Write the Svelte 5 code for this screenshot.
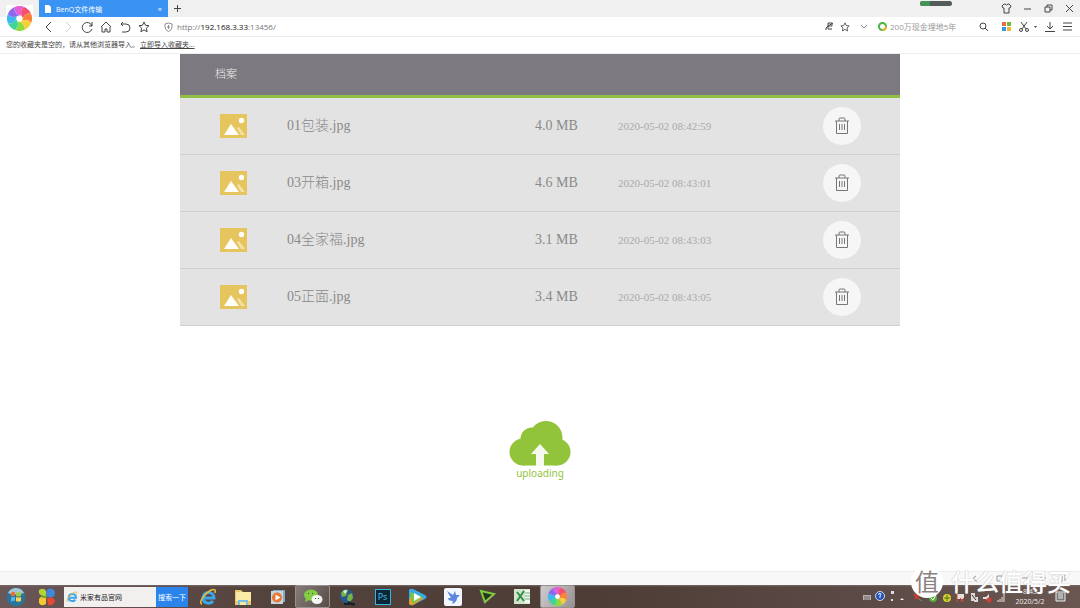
<script lang="ts">
	let files = $state([
		{ name: '01包装.jpg', size: '4.0 MB', date: '2020-05-02 08:42:59' },
		{ name: '03开箱.jpg', size: '4.6 MB', date: '2020-05-02 08:43:01' },
		{ name: '04全家福.jpg', size: '3.1 MB', date: '2020-05-02 08:43:03' },
		{ name: '05正面.jpg', size: '3.4 MB', date: '2020-05-02 08:43:05' }
	]);

	let url = $state('http://192.168.3.33:13456/');
	let editing = $state(false);
	let query = $state('米家有品官网');

	// scheme, host and the rest are tinted separately
	let parts = $derived(url.match(/^(\w+:\/\/)?([^:/]*)(.*)$/) ?? []);

	const nav = [
		{ label: '后退', d: 'M8 1 3 6l5 5' },
		{ label: '前进', d: 'M4 1l5 5-5 5', off: true },
		{ label: '刷新', d: 'M11 5a5 5 0 1 0 0 3M11 1v4H8' },
		{ label: '主页', d: 'M1 6l5-5 5 5M2 6v5h3V8h2v3h3V6' },
		{ label: '撤销', d: 'M4 1 2 3l2 2M2 3h5a4 4 0 0 1 0 8H3' },
		{ label: '收藏', d: 'M6 1l1.500 3.300 3.500.4-2.600 2.400.7 3.600L6 8.900 2.900 10.700l.7-3.600L1 4.700l3.500-.4z' }
	];

	const windowButtons = [
		{ label: '皮肤', d: 'M3 1 1 3l1 2h1v5h5V5h1l1-2-2-2H7q-1.500 2-3 0z' },
		{ label: '最小化', d: 'M2 6h7' },
		{ label: '还原', d: 'M2 4h5v5H2zM4 4V2h5v5H7' },
		{ label: '关闭', d: 'M2 2l7 7M9 2 2 9' }
	];

	// clockwise from the top
	const wheel = ['#e45fd6', '#f4506e', '#f98238', '#f5cf3c', '#8ddb3f', '#3fd596', '#3cb9ef', '#8b68ec'];

	function remove(name: string) {
		files = files.filter((f) => f.name !== name);
	}
</script>

{#snippet pinwheel(size: number)}
	<svg width={size} height={size} viewBox="-12 -12 24 24">
		{#each wheel as fill, i}
			<path {fill} transform="rotate({i * 45})" d="M0-3Q-6-6-4.600-11.100A12 12 0 0 1 4.600-11.100Q0-8.500 2.100-2.100z" />
		{/each}
		<circle r="3" fill="#fff" />
	</svg>
{/snippet}

{#snippet ie(size: number)}
	<svg width={size} height={size} viewBox="0 0 18 18" fill="none">
		<path d="M4 10h11a5.500 5.500 0 0 0-11 0 5.500 5 0 0 0 10 3" stroke="#3ba6ea" stroke-width="3" />
		<path d="M3 16C-1 15 5 6 12 2c3-1 5-1 4 3" stroke="#e7bd3c" stroke-width="1.500" />
	</svg>
{/snippet}

<div class="screen">
	<header>
		<div class="logo">{@render pinwheel(25)}</div>
		<div class="bars">
			<div class="tabs">
				<div class="tab">
					<svg width="6" height="8" viewBox="0 0 6 8"><path d="M0 0h4l2 2v6H0z" fill="#fff" /></svg>
					<span>BenQ文件传输</span>
					<button aria-label="关闭标签">×</button>
				</div>
				<button class="add" aria-label="新标签">
					<svg width="9" height="9" viewBox="0 0 9 9"><path d="M4.500 1v7M1 4.500h7" /></svg>
				</button>
				<div class="progress"><i></i></div>
				<div class="window-buttons">
					{#each windowButtons as b}
						<button aria-label={b.label}>
							<svg width="11" height="11" viewBox="0 0 11 11"><path d={b.d} /></svg>
						</button>
					{/each}
				</div>
			</div>
			<div class="toolbar">
				{#each nav as n}
					<button class="nav" class:off={n.off} aria-label={n.label}>
						<svg width="12" height="12" viewBox="0 0 12 12"><path d={n.d} /></svg>
					</button>
				{/each}
				<svg class="shield" width="9" height="10" viewBox="0 0 9 10">
					<path d="M4.500 1 8 2v3q0 3-3.500 4.500Q1 8 1 5V2zM4.500 3v4M3 5h3" />
				</svg>
				{#if editing}
					<input class="url" aria-label="地址" bind:value={url} onblur={() => (editing = false)} />
				{:else}
					<button class="url" onclick={() => (editing = true)}>{parts[1]}<b>{parts[2]}</b>{parts[3]}</button>
				{/if}
				<div class="page-tools">
					<button aria-label="兼容模式">
						<svg width="9" height="9" viewBox="0 0 9 9"><path d="M3 4h4V1H3v6h4M1 8q-1-2 2-4l5-3" /></svg>
					</button>
					<button aria-label="加入收藏">
						<svg width="10" height="10" viewBox="0 0 12 12"><path d={nav[5].d} /></svg>
					</button>
				</div>
				<button class="drop" aria-label="展开">
					<svg width="8" height="6" viewBox="0 0 8 6"><path d="M1 1l3 3 3-3" /></svg>
				</button>
				<label class="web-search">
					<svg width="9" height="9" viewBox="0 0 9 9">
						<circle class="ring" cx="4.500" cy="4.500" r="3.500" />
						<path class="ring-end" d="M4.500 8A3.500 3.500 0 0 0 8 4.500" />
					</svg>
					<input aria-label="搜索" placeholder="200万现金埋地5年" />
					<svg width="9" height="9" viewBox="0 0 9 9"><circle cx="4" cy="4" r="3" /><path d="M6 6l3 3" /></svg>
				</label>
				<div class="extras">
					<button aria-label="应用">
						<svg width="9" height="9" viewBox="0 0 9 9" class="solid">
							<path fill="#ef6a3c" d="M0 0h4v4H0z" /><path fill="#6fba3c" d="M5 0h4v4H5z" />
							<path fill="#3199e8" d="M0 5h4v4H0z" /><path fill="#f4b92f" d="M5 5h4v4H5z" />
						</svg>
					</button>
					<button class="cut" aria-label="截图">
						<svg width="10" height="10" viewBox="0 0 10 10">
							<path d="M2 0l5 7M8 0 3 7" /><circle cx="2" cy="8" r="1.500" /><circle cx="8" cy="8" r="1.500" />
						</svg>
						<svg width="3" height="2" viewBox="0 0 3 2" class="solid"><path d="M0 0h3L1.500 2z" fill="#444" /></svg>
					</button>
					<button aria-label="下载">
						<svg width="10" height="10" viewBox="0 0 10 10"><path d="M5 0v7M2 4l3 3 3-3M0 9.500h10" /></svg>
					</button>
					<button aria-label="菜单">
						<svg width="9" height="9" viewBox="0 0 9 9"><path d="M0 1h9M0 4.500h9M0 8h9" /></svg>
					</button>
				</div>
			</div>
		</div>
	</header>

	<div class="favorites">
		<span>您的收藏夹是空的，请从其他浏览器导入。</span>
		<a href="#import">立即导入收藏夹...</a>
	</div>

	<main>
		<section class="archive">
			<h1>档案</h1>
			<table>
				<tbody>
					{#each files as file (file.name)}
						<tr>
							<td class="thumb">
								<svg width="27" height="24" viewBox="0 0 27 24">
									<path d="M0 0h27v24H0z" fill="#e6c55f" />
									<path d="M17 14l2-1 6 8h-4z" fill="#f3e1a6" />
									<path d="M4 21l7-11 8 11z" fill="#fffef8" />
									<circle cx="21.500" cy="6.500" r="2.700" fill="#fffef8" />
								</svg>
							</td>
							<td class="name">{file.name}</td>
							<td class="size">{file.size}</td>
							<td class="date">{file.date}</td>
							<td class="action">
								<button aria-label="删除 {file.name}" onclick={() => remove(file.name)}>
									<svg width="16" height="18" viewBox="0 0 16 18">
										<path d="M1 4h14M5 4V2q0-1 1-1h4q1 0 1 1v2M2.500 4v12.500h11V4M5.500 7v6M8 7v6M10.500 7v6" />
									</svg>
								</button>
							</td>
						</tr>
					{/each}
				</tbody>
			</table>
		</section>

		<button class="upload">
			<svg width="62" height="45" viewBox="0 0 62 45">
				<g fill="#92c43b">
					<circle cx="37" cy="16.500" r="16.500" /><circle cx="23" cy="18" r="11.500" />
					<circle cx="14" cy="31" r="13.500" /><circle cx="48" cy="31" r="13.500" />
					<path d="M14 18h34v26.500H14z" />
				</g>
				<path d="M31 23l9 10h-5v12h-8V33h-5z" fill="#f7faef" />
			</svg>
			<span>uploading</span>
		</button>
	</main>

	<div class="status">
		<svg width="116" height="9" viewBox="0 0 116 9">
			<path d="M2 5l3-3M24 2q-5 2 0 5h3M45 2h5v5h-5zM70 4h6M91 1v7M88 4h6M110 2v6M113 1v6" />
		</svg>
	</div>

	<footer>
		<button class="start" aria-label="开始">
			<svg width="20" height="20" viewBox="0 0 20 20">
				<circle cx="10" cy="10" r="9.500" fill="#2a7598" />
				<path d="M2 6a9 9 0 0 1 16 0q-8 3-16 0" fill="#a6c7d3" />
				<path d="M5 6q2-2 4-1v4Q7 8 5 10z" fill="#f26b32" /><path d="M10 5q3 1 5 0v4q-3 1-5 0z" fill="#9dcc47" />
				<path d="M5 11q2-2 4-1v4q-2-1-4 1z" fill="#55b9ef" /><path d="M10 10q3 1 5 0v4q-3 1-5 0z" fill="#ffd54c" />
			</svg>
		</button>
		<button class="start" aria-label="浏览器">
			<svg width="18" height="18" viewBox="0 0 18 18">
				<path d="M1 2q5-3 7 1v5H5Q0 7 1 2" fill="#b5d334" /><circle cx="12.500" cy="5" r="4.500" fill="#4387da" />
				<path d="M1 11q2-4 7-2v7q-5 3-7-1z" fill="#f5c932" /><path d="M9 10q7-2 8 3-1 5-7 4z" fill="#e54a34" />
				<path d="M3 8q4 2 6 0" fill="none" stroke="#6fa53a" stroke-width="2" />
			</svg>
		</button>
		<form onsubmit={(e) => e.preventDefault()}>
			<label>
				{@render ie(12)}
				<input aria-label="桌面搜索" bind:value={query} />
			</label>
			<button>搜索一下</button>
		</form>
		<nav>
			<button aria-label="Internet Explorer">{@render ie(18)}</button>
			<button aria-label="资源管理器">
				<svg width="18" height="18" viewBox="0 0 18 18">
					<path d="M1 2h6l2 2h8v13H1z" fill="#e8c76b" /><path d="M2 4h15v9H2z" fill="#fbeaa4" />
					<path d="M4 12h10v5H4z" fill="#7dbfe4" /><path d="M6 14h6v3H6z" fill="#f8e8a0" />
				</svg>
			</button>
			<button aria-label="播放器">
				<svg width="16" height="16" viewBox="0 0 16 16">
					<path d="M3 1h12v12H3z" fill="#83aac7" /><path d="M1 2h12v13H1z" fill="#c6d6df" />
					<circle cx="7" cy="8.500" r="5" fill="#e97730" /><path d="M5.500 5.500l5 3-5 3z" fill="#fff" />
				</svg>
			</button>
			<button class="open" aria-label="微信">
				<svg width="20" height="16" viewBox="0 0 20 16">
					<ellipse cx="8" cy="6" rx="7" ry="5.500" fill="#83cc45" /><path d="M3 9l-1 4 4-2z" fill="#83cc45" />
					<ellipse cx="14" cy="10.500" rx="5.500" ry="4.500" fill="#f4f6f2" />
					<path d="M5 4h1v1H5zM9 4h1v1H9zM12 9h1v1h-1zM15 9h1v1h-1z" fill="#3d5033" />
				</svg>
			</button>
			<button aria-label="网络">
				<svg width="17" height="18" viewBox="0 0 17 18">
					<circle cx="7.500" cy="8" r="7" fill="#28558c" /><path d="M2 5q4-5 7-3l-2 6-4 1zM9 7l4-2 1 5-3 4-3-2z" fill="#77b249" />
					<path d="M4 3q3-2 4 0L6 6z" fill="#dceccc" /><path d="M5 16h11M9 14l6 3" stroke="#17212a" stroke-width="2" />
				</svg>
			</button>
			<button class="ps" aria-label="Photoshop"><span>Ps</span></button>
			<button aria-label="视频">
				<svg width="19" height="18" viewBox="0 0 19 18">
					<path d="M1 2q1-2 4-1l12 6q3 2 0 4L5 17q-4 1-4-3z" fill="#36a9e9" />
					<path d="M2 9l14 1-11 7q-4 1-4-3z" fill="#f49a27" /><path d="M2 4l13 5-11 7z" fill="#75c93e" />
					<path d="M6 5l7 4-7 4z" fill="#fff" />
				</svg>
			</button>
			<button aria-label="迅雷">
				<svg width="18" height="18" viewBox="0 0 18 18">
					<rect width="18" height="18" rx="2" fill="#f3f6fc" />
					<path d="M3 3l6 4 2-4 1 4 4 0-3 3q0 4-5 6l1-3q-5 0-5-3l3 0z" fill="#5b87e0" />
				</svg>
			</button>
			<button aria-label="加速器">
				<svg width="18" height="16" viewBox="0 0 18 16">
					<path d="M4 14l11-9" stroke="#71307b" stroke-width="3" />
					<path d="M2 2l13 3-9 8z" fill="#28351f" stroke="#7fcc3e" stroke-width="2" />
				</svg>
			</button>
			<button aria-label="Excel">
				<svg width="17" height="17" viewBox="0 0 17 17">
					<path d="M0 1h16v15H0z" fill="#cfe5cc" /><path d="M11 2h5v13h-5z" fill="#f2f8ef" />
					<path d="M3 4l7 9M10 3l-7 10" stroke="#338c49" stroke-width="2" /><path d="M11 5h5M11 8h5M11 11h5" stroke="#6eb37c" />
				</svg>
			</button>
			<button class="open active" aria-label="当前浏览器">{@render pinwheel(19)}</button>
		</nav>
		<div class="tray">
			<svg width="148" height="14" viewBox="0 0 148 14">
				<path d="M1 5h8v5H1z" fill="#b8b2ae" /><path d="M2 7h6M2 9h6" stroke="#6a6360" />
				<circle cx="18" cy="6" r="4.500" fill="#234fb8" stroke="#cbd8ef" /><path d="M16.500 5q0-2 2-1.500 1 1-.5 2.500V8" stroke="#fff" fill="none" />
				<path d="M29 1h3v3h-3zM29 9h2v2h-2z" fill="#ddd" /><path d="M38 10l2-2 2 2z" fill="#eee" />
				<path d="M52 4l5 5M57 4l-4 5" stroke="#d3382b" stroke-width="2" /><path d="M57 9l3 2" stroke="#48ab52" />
				<circle cx="71" cy="8" r="4" fill="#57ae42" /><path d="M69 8l2 2 3-5" stroke="#fff" fill="none" />
				<circle cx="85" cy="8" r="4" fill="#d9d32a" /><path d="M82 8h6M85 5v6" stroke="#48751c" />
				<path d="M95 4h7v5h-7z" fill="#e6deda" /><path d="M95 4v8M98 8l4 4M102 8l-4 4" stroke="#d24a40" />
				<path d="M109 3h4v8h-4zM113 7h3v5h-4z" fill="#dcd9d5" /><path d="M110 5l4 5" stroke="#333" />
				<path d="M121 7h3l3-3v8l-3-3h-3z" fill="#e3dfdb" /><circle cx="127" cy="10" r="2.500" fill="#d43d38" />
				<path d="M136 12V10M138 12V9M140 12V7M142 12V4" stroke="#e9e5e2" />
			</svg>
			<time>8:43<br />2020/5/2</time>
			<svg width="11" height="11" viewBox="0 0 11 11">
				<path d="M1 1h9v9H1z" fill="#777" stroke="#eee" /><path d="M3 3h5M3 5h5M3 7h5" stroke="#eee" />
			</svg>
		</div>
	</footer>

	<div class="watermark"><b>值</b><span>什么值得买</span></div>
</div>

<style>
	:global(body) {
		margin: 0;
	}

	.screen {
		position: relative;
		display: flex;
		flex-direction: column;
		min-height: 100vh;
		background: #fff;
		font-family: 'Open Sans', 'Noto Sans CJK SC', sans-serif;
		font-size: 7px;
		color: #444;
	}

	button,
	input {
		border: 0;
		padding: 0;
		margin: 0;
		background: none;
		font: inherit;
		color: inherit;
		outline: none;
	}

	button {
		display: flex;
		align-items: center;
		justify-content: center;
		cursor: pointer;
	}

	svg {
		display: block;
		flex: none;
	}

	header {
		display: flex;
		background: #fff;
	}

	.bars svg:not(.solid) {
		fill: none;
		stroke: #444;
	}

	.logo {
		display: flex;
		align-items: center;
		justify-content: center;
		box-sizing: border-box;
		width: 39px;
		background: linear-gradient(#f0f0f0 17px, #fff 17px);
	}

	.logo svg {
		padding: 1px;
		background: #fff;
	}

	.bars {
		flex: 1;
	}

	.tabs {
		display: flex;
		height: 17px;
		background: #f0f0f0;
	}

	.tab {
		display: flex;
		align-items: center;
		gap: 5px;
		width: 117px;
		padding: 0 6px;
		background: #3a92f2;
		color: #fff;
	}

	.bars .tab svg {
		stroke: none;
	}

	.tab button {
		margin-left: auto;
		font-size: 8px;
	}

	.add {
		width: 19px;
	}

	.progress {
		width: 32px;
		height: 5px;
		margin: 1px 44px 0 auto;
		border-radius: 3px;
		background: #555b58;
		overflow: hidden;
	}

	.progress i {
		display: block;
		width: 32%;
		height: 100%;
		background: #429456;
	}

	.window-buttons {
		display: flex;
	}

	.window-buttons button {
		width: 21px;
	}

	.toolbar {
		display: flex;
		align-items: center;
		height: 19px;
	}

	.nav {
		width: 19px;
	}

	.off {
		opacity: 0.25;
	}

	.shield {
		margin: 0 4px 0 11px;
		opacity: 0.6;
	}

	.url {
		flex: 1;
		justify-content: flex-start;
		font-size: 8px;
		color: #777;
	}

	.url b {
		font-weight: 400;
		color: #111;
	}

	.page-tools {
		display: flex;
		gap: 6px;
		margin-right: 10px;
	}

	.drop {
		margin-right: 10px;
		opacity: 0.6;
	}

	.web-search {
		display: flex;
		align-items: center;
		gap: 3px;
		width: 110px;
		margin-right: 14px;
	}

	.web-search input {
		flex: 1;
		min-width: 0;
		font-size: 8px;
	}

	.web-search input::placeholder {
		color: #999;
		opacity: 1;
	}

	.ring,
	.ring-end {
		stroke: #45b83d;
		stroke-width: 2;
	}

	.ring-end {
		stroke: #f2b72f;
	}

	.extras {
		display: flex;
		gap: 8px;
		padding-right: 8px;
	}

	.cut {
		gap: 5px;
	}

	.favorites {
		display: flex;
		align-items: center;
		gap: 1px;
		height: 14px;
		padding: 0 6px 2px;
		border-top: 1px solid #ececec;
	}

	.favorites a {
		color: inherit;
	}

	main {
		flex: 1;
		display: flex;
		flex-direction: column;
		align-items: center;
		border-top: 1px solid #eee;
	}

	.archive {
		width: calc(100% * 2 / 3);
		background: #e3e3e3;
	}

	h1 {
		margin: 0;
		padding: 0 35px 2px;
		border-bottom: 3px solid #92c047;
		background: #7d7980;
		color: #eee;
		font-size: 11px;
		font-weight: 300;
		line-height: 39px;
	}

	table {
		width: 100%;
		table-layout: fixed;
		border-spacing: 0;
		font-family: 'Liberation Serif', 'Noto Sans CJK SC', serif;
		font-size: 14px;
		font-weight: 300;
		line-height: 20px;
		color: #8a8a8a;
	}

	td {
		box-sizing: border-box;
		height: 57px;
		padding: 0;
		border-bottom: 1px solid #d0d0d0;
		vertical-align: middle;
	}

	.thumb {
		width: 107px;
		padding-left: 40px;
	}

	.size {
		width: 83px;
	}

	.date {
		width: 205px;
		font-size: 11px;
		color: #aaa;
	}

	.action {
		width: 77px;
	}

	.action button {
		width: 38px;
		height: 38px;
		border-radius: 50%;
		background: #f6f6f6;
	}

	.action svg {
		fill: none;
		stroke: #777;
	}

	.upload {
		flex-direction: column;
		margin-top: 95px;
		font-family: 'Noto Sans', sans-serif;
		font-size: 10px;
		line-height: 14px;
		color: #92c43b;
	}

	.status {
		display: flex;
		justify-content: flex-end;
		align-items: center;
		height: 13px;
		padding-right: 12px;
		border-top: 1px solid #eee;
		background: #f8f8f8;
	}

	.status svg {
		fill: none;
		stroke: #999;
	}

	footer {
		display: flex;
		align-items: center;
		height: 23px;
		background: linear-gradient(#776a66, transparent 2px), linear-gradient(90deg, #6b5658, #54423c 25%, #4d3d36 55%, #5c4a46 80%, #6a5752);
	}

	.start {
		width: 31px;
	}

	form {
		display: flex;
		align-self: stretch;
		margin: 2px 2px 1px;
	}

	form label {
		display: flex;
		align-items: center;
		gap: 2px;
		width: 90px;
		padding-left: 2px;
		background: #f1f0ef;
	}

	form input {
		flex: 1;
		min-width: 0;
		color: #222;
	}

	form button {
		width: 32px;
		background: #2b84ec;
		color: #fff;
	}

	nav {
		display: flex;
		align-self: stretch;
	}

	nav button {
		width: 35px;
	}

	.open {
		border: 1px solid #98908c;
		border-radius: 2px;
		background: linear-gradient(120deg, #847b77, #5a4d48);
	}

	.active {
		background: linear-gradient(120deg, #cfcbcd, #989194);
	}

	.ps span {
		width: 14px;
		border: 1px solid #35b6df;
		background: #0b2636;
		color: #42c7f2;
		font-size: 9px;
		line-height: 14px;
	}

	.tray {
		display: flex;
		align-items: center;
		gap: 2px;
		margin-left: auto;
		padding-right: 14px;
	}

	time {
		width: 36px;
		margin-right: 5px;
		text-align: center;
		line-height: 10px;
		color: #eee;
	}

	/* site mark lies over the status bar and the tray */
	.watermark {
		position: absolute;
		right: 9px;
		bottom: 10px;
		display: flex;
		align-items: center;
		gap: 8px;
		color: #fff;
		font-size: 24px;
		font-weight: 500;
		line-height: 32px;
		text-shadow: 0 0 1px #999;
		pointer-events: none;
	}

	.watermark b {
		width: 32px;
		border-radius: 50%;
		background: #fff;
		color: #8a8280;
		font-weight: 400;
		text-align: center;
		text-shadow: none;
	}
</style>
